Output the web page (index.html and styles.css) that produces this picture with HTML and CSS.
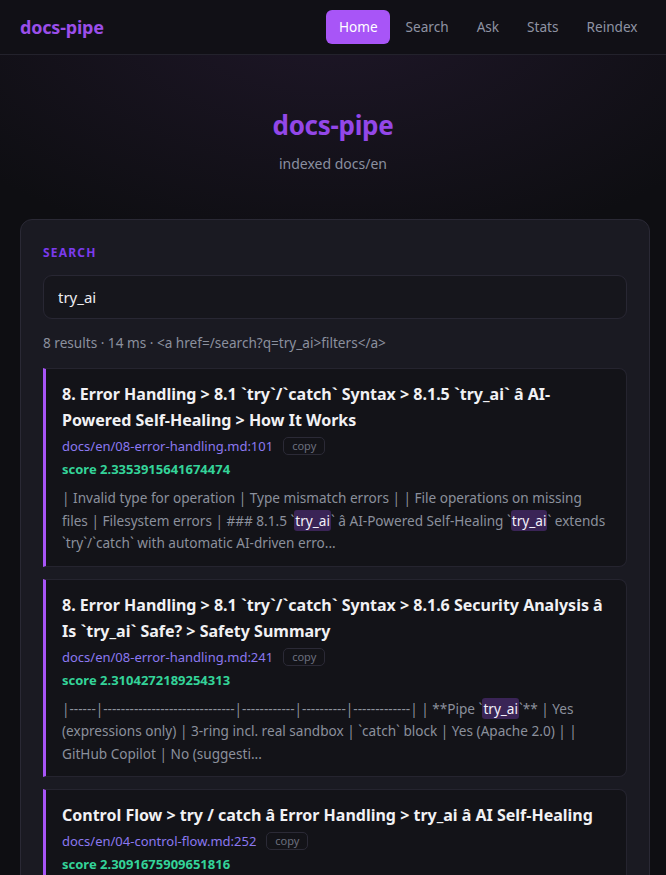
FILE: index.html
```html
<!DOCTYPE html>
<html lang="en">

<head>
  <meta charset="UTF-8">
  <meta name="viewport" content="width=device-width, initial-scale=1.0">
  <title>docs-pipe · search</title>
  <link rel="stylesheet" href="styles.css">
</head>

<body>

  <header class="topbar">
    <a class="brand" href="/">docs-pipe</a>
    <nav class="nav">
      <a class="nav-link active" href="/">Home</a>
      <a class="nav-link" href="/search">Search</a>
      <a class="nav-link" href="/ask">Ask</a>
      <a class="nav-link" href="/stats">Stats</a>
      <a class="nav-link" href="/reindex">Reindex</a>
    </nav>
  </header>

  <section class="hero">
    <h1 class="hero-title">docs-pipe</h1>
    <p class="hero-sub">indexed docs/en</p>
  </section>

  <main class="panel">
    <div class="panel-label">Search</div>
    <input class="search-input" type="text" value="try_ai">
    <p class="meta">8 results · 14 ms · &lt;a href=/search?q=try_ai&gt;filters&lt;/a&gt;</p>

    <!-- 検索結果 -->
    <div class="results">
      <article class="result">
        <h3 class="result-title">8. Error Handling &gt; 8.1 `try`/`catch` Syntax &gt; 8.1.5 `try_ai` â AI-Powered Self-Healing &gt; How It Works</h3>
        <div class="result-path">
          <a href="#">docs/en/08-error-handling.md:101</a>
          <button class="copy-btn">copy</button>
        </div>
        <div class="score">score 2.3353915641674474</div>
        <p class="snippet">| Invalid type for operation | Type mismatch errors | | File operations on missing files | Filesystem errors | ### 8.1.5 `<mark>try_ai</mark>` â AI-Powered Self-Healing `<mark>try_ai</mark>` extends `try`/`catch` with automatic AI-driven erro...</p>
      </article>

      <article class="result">
        <h3 class="result-title">8. Error Handling &gt; 8.1 `try`/`catch` Syntax &gt; 8.1.6 Security Analysis â Is `try_ai` Safe? &gt; Safety Summary</h3>
        <div class="result-path">
          <a href="#">docs/en/08-error-handling.md:241</a>
          <button class="copy-btn">copy</button>
        </div>
        <div class="score">score 2.3104272189254313</div>
        <p class="snippet">|------|------------------------------|------------|----------|-------------| | **Pipe `<mark>try_ai</mark>`** | Yes (expressions only) | 3-ring incl. real sandbox | `catch` block | Yes (Apache 2.0) | | GitHub Copilot | No (suggesti...</p>
      </article>

      <article class="result">
        <h3 class="result-title">Control Flow &gt; try / catch â Error Handling &gt; try_ai â AI Self-Healing</h3>
        <div class="result-path">
          <a href="#">docs/en/04-control-flow.md:252</a>
          <button class="copy-btn">copy</button>
        </div>
        <div class="score">score 2.3091675909651816</div>
        <p class="snippet">`<mark>try_ai</mark>` wraps a block and, on failure, asks the model to repair the input before retrying...</p>
      </article>
    </div>
  </main>

</body>
</html>
```

FILE: styles.css
```css
* {
  box-sizing: border-box;
}

body {
  margin: 0;
  font-family: "Noto Sans", "Open Sans", sans-serif;
  color: #e6e6ea;
  background: #0e0e12;
  background-image: radial-gradient(ellipse 70% 260px at 50% 0, #1f1729 0%, #0e0e12 100%);
  background-repeat: no-repeat;
}

a {
  text-decoration: none;
}

.topbar {
  display: flex;
  align-items: center;
  justify-content: space-between;
  height: 55px;
  padding: 0 16px 0 20px;
  background: #111016;
  border-bottom: 1px solid #23222c;
}

.brand {
  color: #9b4ee9;
  font-size: 18px;
  font-weight: 700;
  letter-spacing: -0.2px;
}

.nav {
  display: flex;
  gap: 3px;
}

.nav-link {
  padding: 7px 12.5px;
  border-radius: 6px;
  color: #8f93a3;
  font-size: 13.6px;
  line-height: 20px;
}

.nav-link.active {
  background: #a855f7;
  color: #fff;
}

/* ヒーロー */
.hero {
  padding: 53px 20px 45px;
  text-align: center;
}

.hero-title {
  margin: 0 0 12px;
  color: #9347e8;
  font-size: 26px;
  line-height: 34px;
  font-weight: 700;
  letter-spacing: -0.3px;
}

.hero-sub {
  margin: 0;
  color: #8a8fa0;
  font-size: 14px;
  line-height: 20px;
}

.panel {
  margin: 0 16px 0 20px;
  padding: 25px 22px;
  background: #1a1a22;
  border: 1px solid #2a2935;
  border-radius: 12px;
}

.panel-label {
  color: #7c3aed;
  font-size: 12px;
  line-height: 16px;
  font-weight: 700;
  letter-spacing: 1.2px;
  text-transform: uppercase;
}

.search-input {
  display: block;
  width: 100%;
  height: 44px;
  margin-top: 14px;
  padding: 0 14px;
  background: #16161c;
  border: 1px solid #282733;
  border-radius: 9px;
  color: #ececf0;
  font-family: inherit;
  font-size: 15px;
  outline: none;
}

.meta {
  margin: 14px 0 15px;
  color: #8b909e;
  font-size: 13.6px;
  line-height: 20px;
}

.results {
  display: flex;
  flex-direction: column;
  gap: 12px;
}

.result {
  padding: 12px 16px 11px 16px;
  background: #131318;
  border: 1px solid #25242f;
  border-left: 3px solid #a855f7;
  border-radius: 0 8px 8px 0;
}

.result-title {
  margin: 0;
  color: #f1f1f4;
  font-size: 16px;
  line-height: 26px;
  font-weight: 700;
}

.result-path {
  display: flex;
  align-items: center;
  gap: 10px;
  margin-top: 3px;
  font-size: 13px;
  line-height: 20px;
}

.result-path a {
  color: #8b78f0;
}

.copy-btn {
  padding: 0 8px;
  height: 18px;
  background: transparent;
  border: 1px solid #2b2a36;
  border-radius: 5px;
  color: #6b6f7e;
  font-family: inherit;
  font-size: 11px;
  line-height: 16px;
}

.score {
  margin-top: 3px;
  color: #34d399;
  font-size: 13px;
  line-height: 20px;
  font-weight: 700;
}

.snippet {
  margin: 8px 0 0;
  color: #8b909c;
  font-size: 13.6px;
  line-height: 22.5px;
}

.snippet mark {
  padding: 1px 1px;
  background: #3a2456;
  color: #f3f0fa;
  border-radius: 3px;
}
```
